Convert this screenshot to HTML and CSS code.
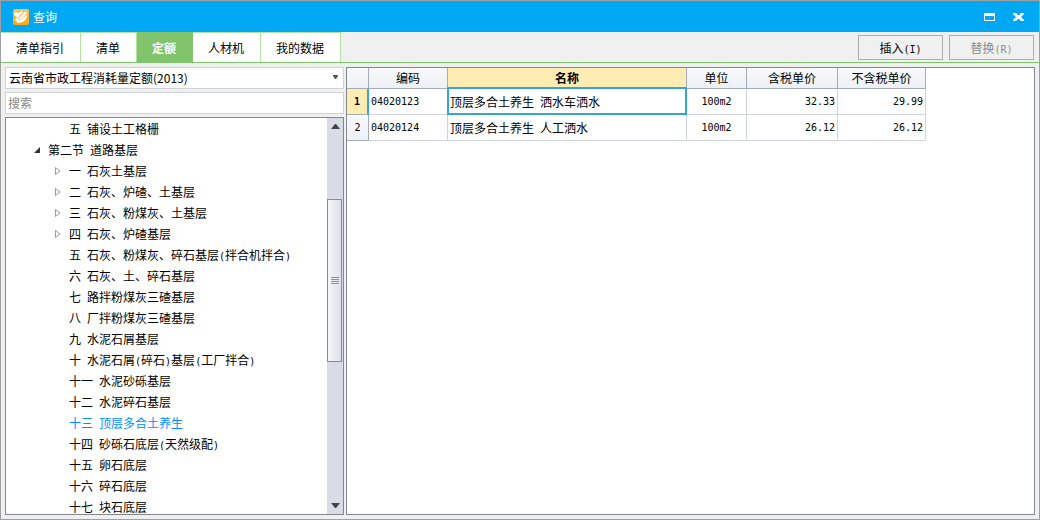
FILE: index.html
```html
<!DOCTYPE html>
<html lang="zh-CN">
<head>
<meta charset="utf-8">
<title>查询</title>
<link rel="stylesheet" href="styles.css">
</head>
<body>
<div class="window">
  <header class="titlebar">
    <svg class="logo" width="16" height="16" viewBox="0 0 16 16" aria-hidden="true">
      <defs><linearGradient id="lg" x1="0" y1="0" x2="0" y2="1"><stop offset="0" stop-color="#f9c05a"/><stop offset="1" stop-color="#fbab12"/></linearGradient></defs>
      <rect width="16" height="16" rx="2" fill="url(#lg)"/>
      <path d="M2 3L6 4L8 2L10 3L7 6L5 9L7 10L14 6L13 10L10 13L5 14L2 11L4 9L3 7L1 6Z" fill="#fff"/>
      <path d="M6 8.500L12 2L14.500 4L8.500 10L5.500 11Z" fill="#fff" stroke="#f5b04a" stroke-width=".6"/>
    </svg>
    <h1 class="title">查询</h1>
    <button class="winbtn" type="button" aria-label="最大化"><svg width="11" height="8" viewBox="0 0 11 8"><path d="M0 0H11V8H0ZM1 3V7H10V3Z" fill="#fff" fill-rule="evenodd"/></svg></button>
    <button class="winbtn" type="button" aria-label="关闭"><svg width="11" height="8" viewBox="0 0 11 8"><path d="M0 0H3L5.500 2.500L8 0H11V1L8 4L11 7V8H8L5.500 5.500L3 8H0V7L3 4L0 1Z" fill="#fff"/></svg></button>
  </header>
  <div class="toolbar">
    <nav class="tabs">
      <button class="tab" type="button">清单指引</button>
      <button class="tab" type="button">清单</button>
      <button class="tab active" type="button">定额</button>
      <button class="tab" type="button">人材机</button>
      <button class="tab" type="button">我的数据</button>
    </nav>
    <div class="actions">
      <button class="action" type="button">插入<span class="half">(I)</span></button>
      <button class="action" type="button" disabled>替换<span class="half">(R)</span></button>
    </div>
  </div>
  <main class="content">
    <section class="side">
      <div class="combo">
        <select class="field" aria-label="定额库"><option>云南省市政工程消耗量定额(2013)</option></select>
        <svg class="caret" width="5" height="4" viewBox="0 0 5 4" aria-hidden="true"><path d="M0 0H5V1L3 4H2L0 1Z" fill="#555"/></svg>
      </div>
      <input class="field" type="text" placeholder="搜索" aria-label="搜索">
      <div class="treebox">
        <ul class="tree">
          <li class="row leaf"><span>五</span><span>铺设土工格栅</span></li>
          <li class="row group"><svg width="6" height="6" viewBox="0 0 6 6"><path d="M6 0V6H0Z" fill="#333"/></svg><span>第二节</span><span>道路基层</span></li>
          <li class="row node"><svg width="6" height="8" viewBox="0 0 6 8"><path d="M.5 .5V7.500L5 4Z" fill="#fff" stroke="#999"/></svg><span>一</span><span>石灰土基层</span></li>
          <li class="row node"><svg width="6" height="8" viewBox="0 0 6 8"><path d="M.5 .5V7.500L5 4Z" fill="#fff" stroke="#999"/></svg><span>二</span><span>石灰、炉碴、土基层</span></li>
          <li class="row node"><svg width="6" height="8" viewBox="0 0 6 8"><path d="M.5 .5V7.500L5 4Z" fill="#fff" stroke="#999"/></svg><span>三</span><span>石灰、粉煤灰、土基层</span></li>
          <li class="row node"><svg width="6" height="8" viewBox="0 0 6 8"><path d="M.5 .5V7.500L5 4Z" fill="#fff" stroke="#999"/></svg><span>四</span><span>石灰、炉碴基层</span></li>
          <li class="row leaf"><span>五</span><span>石灰、粉煤灰、碎石基层<span class="half">(</span>拌合机拌合<span class="half">)</span></span></li>
          <li class="row leaf"><span>六</span><span>石灰、土、碎石基层</span></li>
          <li class="row leaf"><span>七</span><span>路拌粉煤灰三碴基层</span></li>
          <li class="row leaf"><span>八</span><span>厂拌粉煤灰三碴基层</span></li>
          <li class="row leaf"><span>九</span><span>水泥石屑基层</span></li>
          <li class="row leaf"><span>十</span><span>水泥石屑<span class="half">(</span>碎石<span class="half">)</span>基层<span class="half">(</span>工厂拌合<span class="half">)</span></span></li>
          <li class="row leaf"><span>十一</span><span>水泥砂砾基层</span></li>
          <li class="row leaf"><span>十二</span><span>水泥碎石基层</span></li>
          <li class="row leaf selected"><span>十三</span><span>顶层多合土养生</span></li>
          <li class="row leaf"><span>十四</span><span>砂砾石底层<span class="half">(</span>天然级配<span class="half">)</span></span></li>
          <li class="row leaf"><span>十五</span><span>卵石底层</span></li>
          <li class="row leaf"><span>十六</span><span>碎石底层</span></li>
          <li class="row leaf"><span>十七</span><span>块石底层</span></li>
        </ul>
        <div class="scrollbar" aria-hidden="true">
          <svg class="arrow" width="9" height="5" viewBox="0 0 9 5"><path d="M4 0H5L9 5H0Z" fill="#444"/></svg>
          <div class="track">
            <div class="before"></div>
            <div class="thumb"><svg width="8" height="7" viewBox="0 0 8 7"><path d="M0 .5H8M0 2.500H8M0 4.500H8M0 6.500H8" stroke="#8b8f98"/></svg></div>
            <div class="after"></div>
          </div>
          <svg class="arrow" width="9" height="5" viewBox="0 0 9 5"><path d="M4 5H5L9 0H0Z" fill="#444"/></svg>
        </div>
      </div>
    </section>
    <section class="results">
      <table class="grid">
        <colgroup><col class="c-no"><col class="c-code"><col class="c-name"><col class="c-unit"><col class="c-tax"><col class="c-net"></colgroup>
        <thead>
          <tr><th></th><th>编码</th><th class="current">名称</th><th>单位</th><th>含税单价</th><th>不含税单价</th></tr>
        </thead>
        <tbody>
          <tr><th class="rowno current half">1</th><td class="half">04020123</td><td class="picked">顶层多合土养生<span class="half"> </span>洒水车洒水</td><td class="half mid">100m2</td><td class="half num">32.33</td><td class="half num">29.99</td></tr>
          <tr><th class="rowno half">2</th><td class="half">04020124</td><td>顶层多合土养生<span class="half"> </span>人工洒水</td><td class="half mid">100m2</td><td class="half num">26.12</td><td class="half num">26.12</td></tr>
        </tbody>
      </table>
    </section>
  </main>
</div>
</body>
</html>
```

FILE: styles.css
```css
* { box-sizing: border-box; }

body {
  margin: 0;
  color: #000;
  font: 12px/20px "Noto Sans CJK SC", sans-serif;
}

button, input, select { font: inherit; color: inherit; margin: 0; border-radius: 0; }

.window {
  display: flex;
  flex-direction: column;
  height: 100vh;
  background: #f0f0f0;
  border: 1px solid #a0a0a0;
}

.half { font-family: "DejaVu Sans Mono", monospace; font-size: 10px; }
span.half { line-height: 1; white-space: pre; }

.titlebar {
  display: flex;
  flex: none;
  align-items: center;
  height: 31px;
  padding: 0 6px 0 12px;
  background: #00a8f3;
  color: #fff;
}
.title { flex: 1; margin: 0 0 0 4px; font-size: 12px; font-weight: 400; }
.winbtn {
  display: flex;
  align-items: center;
  justify-content: center;
  width: 29px;
  height: 24px;
  padding: 0;
  border: 0;
  background: none;
}

.toolbar {
  display: flex;
  flex: none;
  justify-content: space-between;
  height: 31px;
  border-bottom: 1px solid #7ec66c;
}
.tabs { display: flex; }
.tab {
  padding: 1px 16px 0 15px;
  border: 0;
  border-top: 1px solid #b4e3a0;
  border-right: 1px solid #b4e3a0;
  background: #fff;
}
.tab.active {
  border-color: #82c46c;
  background: #82c46c;
  color: #fff;
  font-weight: 700;
}
.actions { display: flex; gap: 6px; padding: 3px 5px 2px 0; }
.action {
  width: 85px;
  padding: 0;
  border: 1px solid #adadad;
  background: #f0f0f0;
}
.action:disabled { color: #8c8c8c; }

.content { display: flex; flex: 1; gap: 2px; min-height: 0; padding: 4px; }
.side { display: flex; flex: none; flex-direction: column; width: 339px; min-height: 0; }
.combo { position: relative; display: flex; }
.field {
  flex: none;
  width: 100%;
  height: 22px;
  margin-bottom: 3px;
  padding: 0 3px;
  border: 1px solid #d0d3d6;
  background: #fff;
  appearance: none;
}
input.field { padding: 0 2px 1px; }
.field::placeholder { color: #888; opacity: 1; }
.caret { position: absolute; top: 8px; right: 6px; }

.treebox {
  display: flex;
  flex: 1;
  min-height: 0;
  border: 1px solid #828790;
  background: #fff;
}
.tree { flex: 1; margin: 0; padding: 0; overflow: hidden; list-style: none; }
.row { display: flex; align-items: center; gap: 6px; height: 21px; white-space: nowrap; }
.leaf { padding-left: 63px; }
.node { padding-left: 49px; }
.node svg { margin-right: 2px; }
.group { padding-left: 28px; }
.group svg { margin-right: 2px; }
.selected { color: #0090ff; }

.scrollbar {
  display: flex;
  flex: none;
  flex-direction: column;
  align-items: center;
  width: 16px;
  padding: 6px 0;
  background: #d8dce5;
}
.arrow { flex: none; }
.track {
  display: flex;
  flex: 1;
  flex-direction: column;
  align-self: stretch;
}
.before { flex: 70; }
.after { flex: 142; }
.thumb {
  display: flex;
  flex: 162;
  align-items: center;
  justify-content: center;
  margin: 0 1px 0 0;
  border: 1px solid #858b9a;
  background: linear-gradient(90deg, #f4f6f9, #dde1e8);
}

.results { flex: 1; min-width: 0; border: 1px solid #828790; background: #fff; }
.grid { table-layout: fixed; width: 579px; border-spacing: 0; }
.c-no { width: 22px; }
.c-code { width: 79px; }
.c-name { width: 239px; }
.c-unit { width: 60px; }
.c-tax { width: 91px; }
.c-net { width: 88px; }
.grid th, .grid td {
  height: 26px;
  padding: 0 2px;
  border-right: 1px solid #d0d3de;
  border-bottom: 1px solid #d0d3de;
  text-align: left;
}
.grid th {
  border-color: #a5acb9;
  background: linear-gradient(#f8f9fb, #edf0f5);
  font-weight: 400;
  text-align: center;
}
.grid thead th { height: 21px; }
.grid th.current { background: #ffecb3; font-weight: 700; }
.grid .rowno.current { border-right: 2px solid #36a5d2; }
.grid .mid { text-align: center; }
.grid .num { text-align: right; }
.picked { position: relative; }
.picked::after {
  content: "";
  position: absolute;
  inset: -2px -1px -1px -1px;
  border: 2px solid #36a5d2;
}
```
